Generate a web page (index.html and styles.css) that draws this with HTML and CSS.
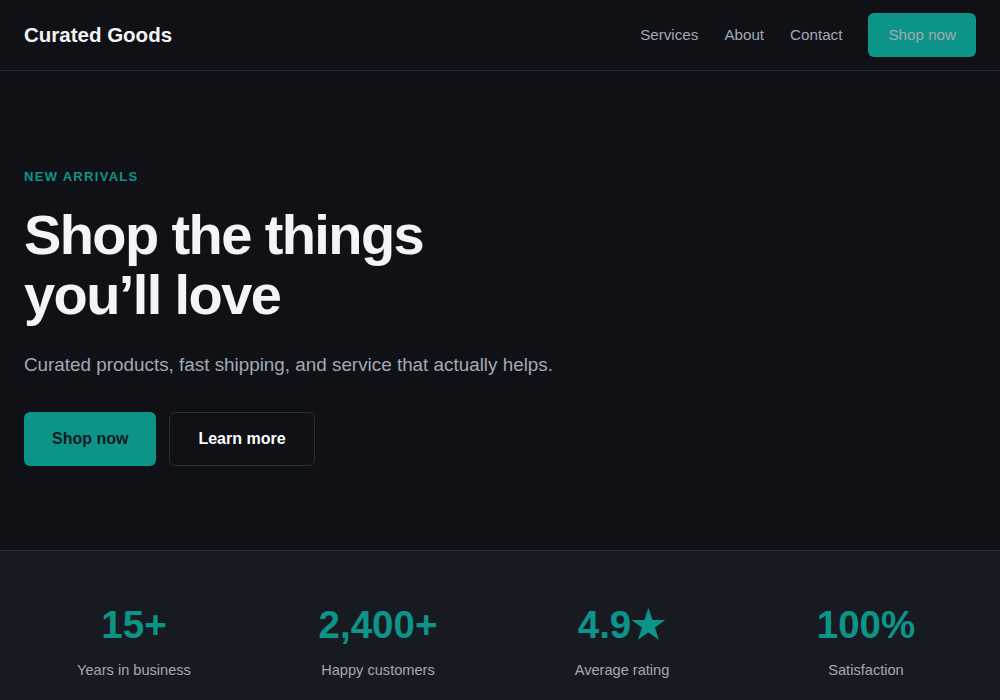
FILE: index.html
```html
<!DOCTYPE html>
<html lang="en">
<head>
<meta charset="utf-8">
<title>Curated Goods</title>
<link rel="stylesheet" href="styles.css">
</head>
<body>
<header class="site-header">
  <div class="logo">Curated Goods</div>
  <nav class="nav">
    <a href="#" class="nav-link">Services</a>
    <a href="#" class="nav-link">About</a>
    <a href="#" class="nav-link">Contact</a>
    <a href="#" class="nav-cta">Shop now</a>
  </nav>
</header>
<main>
  <section class="hero">
    <p class="eyebrow">NEW ARRIVALS</p>
    <h1 class="hero-title">Shop the things<br>you’ll love</h1>
    <p class="hero-sub">Curated products, fast shipping, and service that actually helps.</p>
    <div class="hero-actions">
      <a href="#" class="btn btn-primary">Shop now</a>
      <a href="#" class="btn btn-secondary">Learn more</a>
    </div>
  </section>
  <section class="stats">
    <div class="stat"><div class="stat-value">15+</div><div class="stat-label">Years in business</div></div>
    <div class="stat"><div class="stat-value">2,400+</div><div class="stat-label">Happy customers</div></div>
    <div class="stat"><div class="stat-value">4.9★</div><div class="stat-label">Average rating</div></div>
    <div class="stat"><div class="stat-value">100%</div><div class="stat-label">Satisfaction</div></div>
  </section>
</main>
</body>
</html>
```
FILE: styles.css
```css
* { box-sizing: border-box; }
html, body { margin: 0; padding: 0; }
body {
  background: #101116;
  color: #f3f4f6;
  font-family: "Liberation Sans", Arial, sans-serif;
}
a { text-decoration: none; }

.site-header {
  display: flex;
  align-items: center;
  justify-content: space-between;
  height: 71px;
  padding: 0 24px;
  border-bottom: 1px solid #262833;
}
.logo {
  font-size: 20.5px;
  line-height: 24px;
  font-weight: 700;
  color: #f3f4f6;
  margin-top: -1px;
}
.nav {
  display: flex;
  align-items: center;
  gap: 26px;
}
.nav-link {
  font-size: 15.2px;
  line-height: 20px;
  color: #a3a9b4;
  margin-top: -1px;
}
.nav-cta {
  font-size: 15.2px;
  color: #a3a9b4;
  background: #0d9488;
  padding: 12px 20px;
  line-height: 20px;
  border-radius: 6px;
}

.hero {
  padding: 96px 24px 84px;
}
.eyebrow {
  margin: 0;
  font-size: 13px;
  line-height: 20px;
  font-weight: 700;
  letter-spacing: 1.3px;
  color: #0d9488;
}
.hero-title {
  margin: 18px 0 0;
  font-size: 56px;
  line-height: 60px;
  font-weight: 700;
  letter-spacing: -1.6px;
  color: #f3f4f6;
}
.hero-sub {
  margin: 26px 0 0;
  font-size: 18.85px;
  line-height: 28px;
  color: #a3a9b4;
}
.hero-actions {
  display: flex;
  gap: 13px;
  margin-top: 33px;
}
.btn {
  display: inline-block;
  font-size: 16px;
  font-weight: 700;
  line-height: 22px;
  padding: 16px 28px;
  border-radius: 6px;
}
.btn-primary {
  background: #0d9488;
  color: #0f1a24;
}
.btn-secondary {
  background: #101116;
  color: #ffffff;
  border: 1px solid #2a2c35;
  padding: 15px 28px;
}

.stats {
  display: grid;
  grid-template-columns: repeat(4, 1fr);
  gap: 24px;
  padding: 50px 24px 40px;
  background: #181a21;
  border-top: 1px solid #272a34;
  text-align: center;
}
.stat-value {
  font-size: 38.5px;
  line-height: 48px;
  font-weight: 700;
  color: #0d9488;
}
.stat-label {
  margin-top: 11px;
  font-size: 14.6px;
  line-height: 20px;
  color: #a3a9b4;
}
```
